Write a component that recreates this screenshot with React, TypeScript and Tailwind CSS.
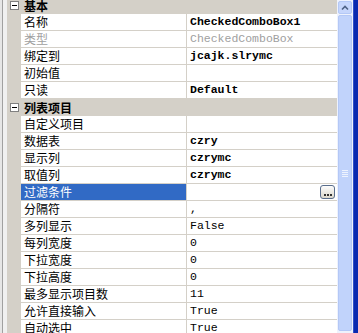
import React from "react";

type Row =
  | { kind: "header"; label: string }
  | { kind: "prop"; name: string; value?: string; bold?: boolean; disabled?: boolean; selected?: boolean; button?: boolean };

const rows: Row[] = [
  { kind: "header", label: "基本" },
  { kind: "prop", name: "名称", value: "CheckedComboBox1", bold: true },
  { kind: "prop", name: "类型", value: "CheckedComboBox", disabled: true },
  { kind: "prop", name: "绑定到", value: "jcajk.slrymc", bold: true },
  { kind: "prop", name: "初始值", value: "" },
  { kind: "prop", name: "只读", value: "Default", bold: true },
  { kind: "header", label: "列表项目" },
  { kind: "prop", name: "自定义项目", value: "" },
  { kind: "prop", name: "数据表", value: "czry", bold: true },
  { kind: "prop", name: "显示列", value: "czrymc", bold: true },
  { kind: "prop", name: "取值列", value: "czrymc", bold: true },
  { kind: "prop", name: "过滤条件", value: "", selected: true, button: true },
  { kind: "prop", name: "分隔符", value: "," },
  { kind: "prop", name: "多列显示", value: "False" },
  { kind: "prop", name: "每列宽度", value: "0" },
  { kind: "prop", name: "下拉宽度", value: "0" },
  { kind: "prop", name: "下拉高度", value: "0" },
  { kind: "prop", name: "最多显示项目数", value: "11" },
  { kind: "prop", name: "允许直接输入", value: "True" },
  { kind: "prop", name: "自动选中", value: "True" },
];

const cjk = { fontFamily: '"Noto Sans CJK SC", "Noto Sans", sans-serif' };
const mono = { fontFamily: '"Liberation Mono", "DejaVu Sans Mono", monospace' };

function MinusBox() {
  return (
    <div className="w-[9px] h-[9px] border border-[#808080] bg-white flex items-center justify-center">
      <div className="w-[5px] h-px bg-black" />
    </div>
  );
}

export default function App() {
  return (
    <div className="w-[358px] h-[333px] overflow-hidden flex bg-white">
      {/* left strip */}
      <div className="w-[7px] h-full flex">
        <div className="w-[2px] bg-[#e6e6e6]" />
        <div className="w-px bg-[#a0a0a0]" />
        <div className="flex-1 bg-[#f0f0f0]" />
      </div>

      {/* grid */}
      <div className="w-[330px] h-full overflow-hidden bg-[#d4d0c8]">
        <div className="-mt-[3px] flex flex-col">
          {rows.map((r, i) =>
            r.kind === "header" ? (
              <div key={i} className="h-[17px] flex items-center bg-[#d4d0c8]">
                <div className="w-[14px] flex justify-center pl-[1px]">
                  <MinusBox />
                </div>
                <span className="pl-[3px] text-[12px] leading-[16px] font-bold text-black" style={cjk}>
                  {r.label}
                </span>
              </div>
            ) : (
              <div key={i} className="h-[17px] flex">
                <div className="w-[14px] bg-[#d4d0c8]" />
                <div
                  className={
                    "w-[165px] h-full border-b border-[#d4d0c8] flex items-center pl-[3px] " +
                    (r.selected ? "bg-[#316ac5]" : "bg-white")
                  }
                >
                  <span
                    className={
                      "text-[12px] leading-[16px] " +
                      (r.selected ? "text-white" : r.disabled ? "text-[#a0a0a0]" : "text-black")
                    }
                    style={cjk}
                  >
                    {r.name}
                  </span>
                </div>
                <div className="w-px bg-[#d4d0c8]" />
                <div className="w-[150px] h-full bg-white border-b border-[#d4d0c8] flex items-center pl-[3px] pr-[2px]">
                  <span
                    className={
                      "text-[11.5px] leading-[16px] " +
                      (r.bold ? "font-bold " : "") +
                      (r.disabled ? "text-[#a0a0a0]" : "text-black")
                    }
                    style={mono}
                  >
                    {r.value}
                  </span>
                  {r.button && (
                    <div className="ml-auto w-[15px] h-[14px] rounded-[3px] border border-[#5a6e8c] bg-gradient-to-b from-[#fdfdfd] to-[#dcd8cc] flex items-end justify-center pb-[2px]">
                      <div className="flex gap-[1px]">
                        <div className="w-[2px] h-[2px] bg-[#333]" />
                        <div className="w-[2px] h-[2px] bg-[#333]" />
                        <div className="w-[2px] h-[2px] bg-[#333]" />
                      </div>
                    </div>
                  )}
                </div>
              </div>
            )
          )}
        </div>
      </div>

      {/* scrollbar */}
      <div className="w-[16px] h-full flex flex-col bg-[#eef2fd]">
        <div className="h-[13px] mx-px mt-px rounded-[2px] border border-[#b4c8f6] bg-[#c6d6fc] flex items-center justify-center">
          <svg width="8" height="6" viewBox="0 0 8 6">
            <path d="M1 4.5 L4 1.5 L7 4.5" stroke="#4d6185" strokeWidth="1.6" fill="none" />
          </svg>
        </div>
        <div className="flex-1 mx-px mt-px mb-[2px] rounded-[2px] border border-[#b4c8f6] bg-[#c1d3fb] flex items-center justify-center">
          <div className="flex flex-col gap-[1px]">
            <div className="w-[6px] h-px bg-[#eef3fe]" />
            <div className="w-[6px] h-px bg-[#eef3fe]" />
            <div className="w-[6px] h-px bg-[#eef3fe]" />
            <div className="w-[6px] h-px bg-[#eef3fe]" />
          </div>
        </div>
      </div>

      {/* window border */}
      <div className="w-[5px] h-full flex">
        <div className="w-px bg-[#3050c8]" />
        <div className="flex-1 bg-[#0a2ab0]" />
      </div>
    </div>
  );
}
